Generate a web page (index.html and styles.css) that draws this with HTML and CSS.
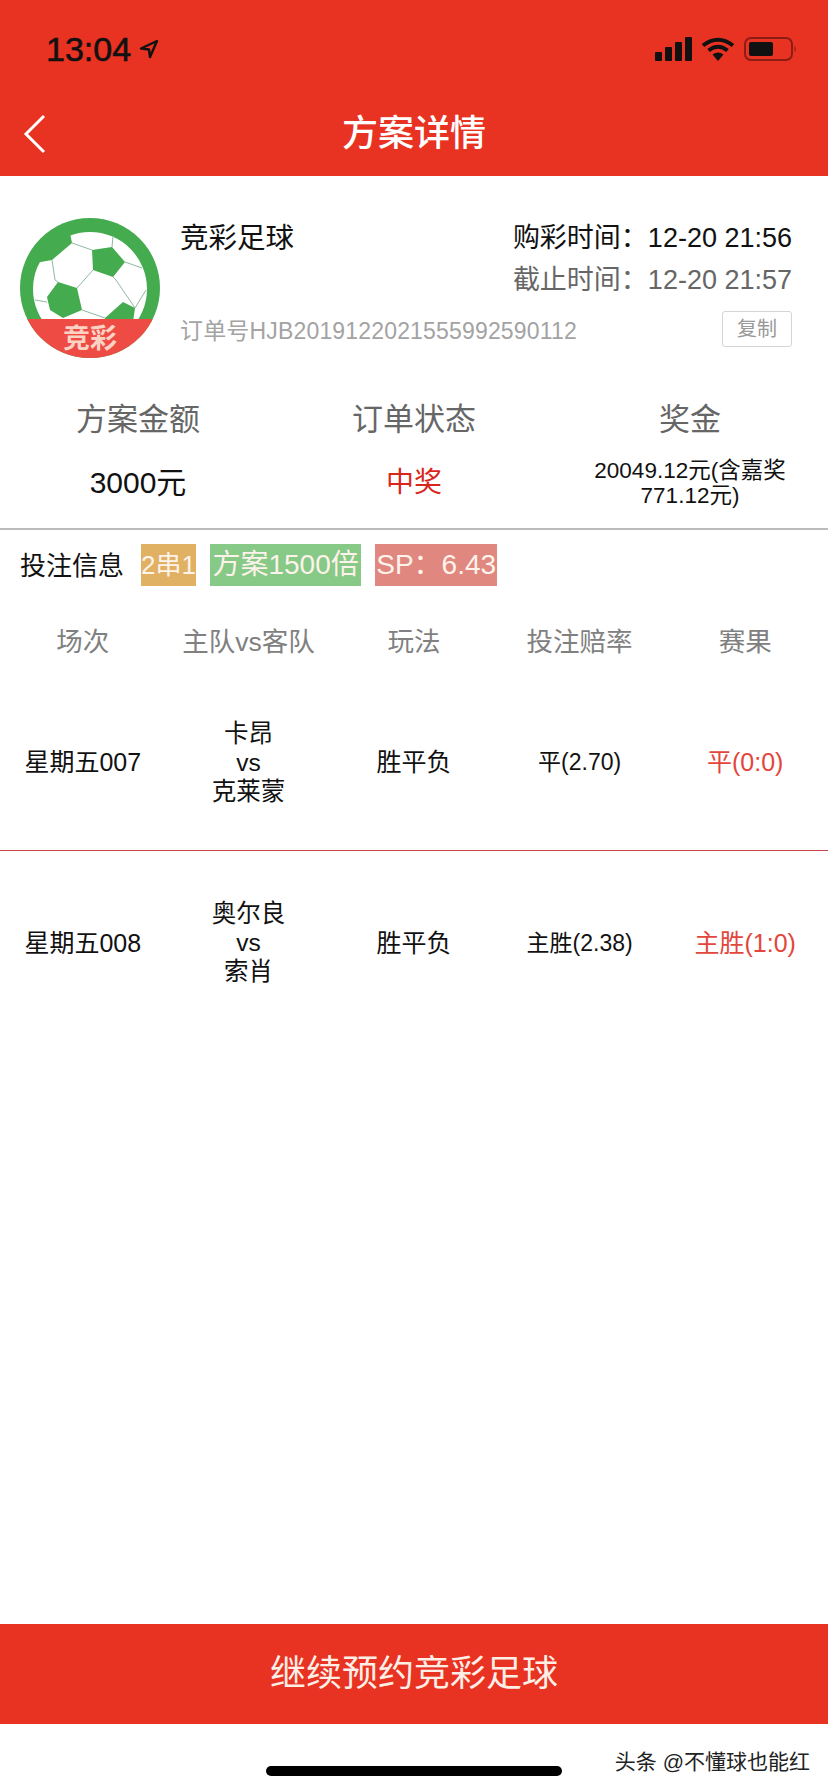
FILE: index.html
```html
<!DOCTYPE html>
<html lang="zh-CN">

<head>
    <meta charset="UTF-8">
    <title>方案详情</title>
    <link rel="stylesheet" href="styles.css">
</head>

<body>
    <div class="page">
        <header class="top">
            <div class="status">
                <div class="clock">
                    <span>13:04</span>
                    <svg class="arrow" width="20" height="20" viewBox="0 0 20 20">
                        <path d="M18 2 L2 9.5 L10 10.5 L11 18 Z" fill="none" stroke="#111" stroke-width="2.4" stroke-linejoin="round"/>
                    </svg>
                </div>
                <div class="status-icons">
                    <svg width="37" height="24" viewBox="0 0 37 24">
                        <rect x="0" y="15" width="7" height="9" rx="1" fill="#111"/>
                        <rect x="10" y="10" width="7" height="14" rx="1" fill="#111"/>
                        <rect x="20" y="5" width="7" height="19" rx="1" fill="#111"/>
                        <rect x="30" y="0" width="7" height="24" rx="1" fill="#111"/>
                    </svg>
                    <svg width="34" height="24" viewBox="0 0 34 24">
                        <path d="M2 8.5 Q17 -3 32 8.5" fill="none" stroke="#111" stroke-width="4"/>
                        <path d="M7.5 13.5 Q17 6 26.5 13.5" fill="none" stroke="#111" stroke-width="4"/>
                        <path d="M17 24 L11.5 17.5 Q17 13.5 22.5 17.5 Z" fill="#111"/>
                    </svg>
                    <svg width="53" height="24" viewBox="0 0 53 24">
                        <rect x="1" y="1" width="47" height="22" rx="6" fill="none" stroke="#8d1c12" stroke-width="2"/>
                        <rect x="5" y="5" width="24" height="14" rx="2" fill="#111"/>
                        <path d="M50.5 8.5 Q53 12 50.5 15.5 Z" fill="#8d1c12"/>
                    </svg>
                </div>
            </div>
            <div class="nav">
                <svg class="back" width="24" height="40" viewBox="0 0 24 40">
                    <path d="M21 2 L3 20 L21 38" fill="none" stroke="#fff" stroke-width="3"/>
                </svg>
                <h1>方案详情</h1>
            </div>
        </header>

        <section class="summary">
            <svg class="logo" width="140" height="140" viewBox="0 0 140 140">
                <defs>
                    <clipPath id="disc">
                        <circle cx="70" cy="70" r="70"/>
                    </clipPath>
                </defs>
                <circle cx="70" cy="70" r="70" fill="#45ab4f"/>
                <circle cx="70" cy="71" r="57" fill="#fff"/>
                <!-- dark patches of the ball -->
                <path d="M50 15 L52 25 L32 42 L15 45 L25 25 Z" fill="#45ab4f"/>
                <path d="M72 32 L92 29 L105 44 L93 59 L73 52 Z" fill="#45ab4f"/>
                <path d="M27 79 L38 64 L57 70 L62 92 L43 100 L30 92 Z" fill="#45ab4f"/>
                <path d="M85 100 L103 84 L115 90 L113 104 L85 104 Z" fill="#45ab4f"/>
                <path d="M52 25 L72 32 M32 42 L35 62 L38 64 M57 70 L73 52 M93 59 L96 62 L115 90 M62 92 L85 100 M105 44 L122 50 M15 82 L27 84 M92 29 L93 18 M115 90 L126 72" fill="none" stroke="#8fb9a0" stroke-width="1"/>
                <g clip-path="url(#disc)">
                    <rect x="0" y="101" width="140" height="39" fill="#ee4b44"/>
                </g>
                <text class="logo-text" x="70" y="130" text-anchor="middle">竞彩</text>
            </svg>
            <div class="info">
                <div class="info-row">
                    <span class="name">竞彩足球</span>
                    <span class="time">购彩时间：12-20 21:56</span>
                </div>
                <div class="info-row info-end">
                    <span class="time time-muted">截止时间：12-20 21:57</span>
                </div>
                <div class="info-row order-row">
                    <span class="order-no">订单号HJB2019122021555992590112</span>
                    <span class="copy">复制</span>
                </div>
            </div>
        </section>

        <section class="stats">
            <div class="stat">
                <div class="stat-label">方案金额</div>
                <div class="stat-value amount">3000元</div>
            </div>
            <div class="stat">
                <div class="stat-label">订单状态</div>
                <div class="stat-value won">中奖</div>
            </div>
            <div class="stat">
                <div class="stat-label">奖金</div>
                <div class="stat-value prize">20049.12元(含嘉奖771.12元)</div>
            </div>
        </section>

        <section class="bet">
            <span class="bet-title">投注信息</span>
            <span class="tag tag-orange">2串1</span>
            <span class="tag tag-green">方案1500倍</span>
            <span class="tag tag-red">SP：6.43</span>
        </section>

        <div class="table-head">
            <span>场次</span>
            <span>主队vs客队</span>
            <span>玩法</span>
            <span>投注赔率</span>
            <span>赛果</span>
        </div>

        <div class="match match-line">
            <span>星期五007</span>
            <span class="teams">卡昂<br>vs<br>克莱蒙</span>
            <span>胜平负</span>
            <span class="odds">平(2.70)</span>
            <span class="result">平(0:0)</span>
        </div>
        <div class="match">
            <span>星期五008</span>
            <span class="teams">奥尔良<br>vs<br>索肖</span>
            <span>胜平负</span>
            <span class="odds">主胜(2.38)</span>
            <span class="result">主胜(1:0)</span>
        </div>

        <div class="spacer"></div>

        <div class="action">继续预约竞彩足球</div>
        <div class="home">
            <span class="home-bar"></span>
        </div>
        <span class="watermark">头条 @不懂球也能红</span>
    </div>
</body>

</html>
```
FILE: styles.css
```css
* {
    box-sizing: border-box;
}

body {
    margin: 0;
    background: #fff;
    font-family: "Liberation Sans", "Noto Sans CJK SC", sans-serif;
    color: #111;
}

.page {
    position: relative;
    display: flex;
    flex-direction: column;
    width: 828px;
    height: 1792px;
    overflow: hidden;
}

/* red header */
.top {
    height: 176px;
    background: #e83222;
}

.status {
    display: flex;
    justify-content: space-between;
    align-items: center;
    height: 88px;
    padding: 10px 31px 0 46px;
}

.clock {
    display: flex;
    align-items: center;
    gap: 8px;
    font-size: 34px;
    font-weight: 500;
    -webkit-text-stroke: 0.6px #111;
}

.status-icons {
    display: flex;
    align-items: center;
    gap: 9px;
}

.nav {
    display: flex;
    align-items: center;
    justify-content: center;
    position: relative;
    height: 88px;
}

.back {
    position: absolute;
    left: 23px;
    top: 26px;
}

.nav h1 {
    margin: 0 0 4px;
    font-size: 36px;
    font-weight: 500;
    color: #fff;
}

/* logo + order info */
.summary {
    display: flex;
    padding: 38px 36px 0 20px;
}

.logo {
    flex: none;
    margin: 4px 20px 0 0;
}

.logo-text {
    font-size: 27px;
    font-weight: 700;
    fill: #fbd2c4;
}

.info {
    flex: 1;
}

.info-row {
    display: flex;
    justify-content: space-between;
    align-items: center;
    height: 42px;
}

.info-end {
    justify-content: flex-end;
}

.order-row {
    margin-top: 10px;
}

.name {
    font-size: 28.5px;
}

.time {
    font-size: 27px;
}

.time-muted {
    color: #666;
}

.order-no {
    font-size: 23px;
    letter-spacing: 0.17px;
    color: #a3a3a3;
}

.copy {
    width: 70px;
    height: 36px;
    line-height: 34px;
    text-align: center;
    font-size: 20px;
    color: #999;
    border: 1px solid #d5d5d5;
    border-radius: 3px;
}

/* three figures */
.stats {
    display: grid;
    grid-template-columns: repeat(3, 1fr);
    height: 130px;
    margin-top: 40px;
    box-sizing: content-box;
    border-bottom: 2px solid #bbb;
}

.stat {
    text-align: center;
}

.stat-label {
    height: 38px;
    padding-top: 3px;
    line-height: 38px;
    font-size: 31px;
    color: #666;
}

.stat-value {
    display: flex;
    align-items: center;
    justify-content: center;
    height: 52px;
    margin-top: 18px;
    font-size: 28px;
}

.amount {
    font-size: 30px;
}

.won {
    color: #d9261c;
}

.prize {
    width: 204px;
    margin-left: auto;
    margin-right: auto;
    padding-top: 5px;
    font-size: 22.5px;
    line-height: 25px;
}

/* bet tags */
.bet {
    display: flex;
    align-items: center;
    height: 42px;
    margin-top: 14px;
    padding-left: 20px;
}

.bet-title {
    margin-right: 17px;
    padding-bottom: 3px;
    font-size: 26px;
}

.tag {
    height: 42px;
    line-height: 42px;
    margin-right: 14px;
    font-size: 28px;
    color: #fdf3ea;
    white-space: nowrap;
}

.tag-orange {
    font-size: 26px;
    background: #e0b063;
}

.tag-green {
    background: #87c987;
    padding: 0 2.5px;
}

.tag-red {
    background: #e0877f;
    padding: 0 1px;
}

/* match table */
.table-head,
.match {
    display: grid;
    grid-template-columns: repeat(5, 1fr);
    align-items: center;
    text-align: center;
}

.table-head {
    height: 40px;
    margin: 33px 0 13px;
    font-size: 26.5px;
    color: #808080;
}

.match {
    height: 179px;
    font-size: 25px;
}

.match-line {
    padding-bottom: 2px;
    border-bottom: 1px solid #c9474a;
}

.teams {
    padding-top: 4px;
    font-size: 24.5px;
    line-height: 29px;
}

.odds {
    font-size: 23px;
}

.result {
    color: #e2463c;
}

.spacer {
    flex: 1;
}

/* bottom */
.action {
    height: 100px;
    line-height: 100px;
    text-align: center;
    font-size: 36px;
    color: #fdeee6;
    background: #e83222;
}

.home {
    display: flex;
    justify-content: center;
    height: 68px;
    padding-top: 42px;
}

.home-bar {
    width: 296px;
    height: 10px;
    background: #000;
    border-radius: 5px;
}

.watermark {
    position: absolute;
    right: 18px;
    bottom: 17px;
    font-size: 21px;
    color: #222;
}
```
